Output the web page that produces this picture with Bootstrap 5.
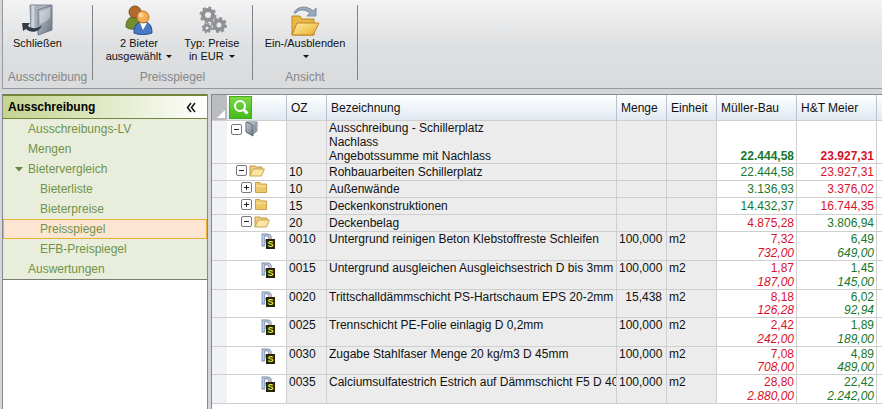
<!DOCTYPE html>
<html lang="de">
<head>
<meta charset="utf-8">
<meta name="viewport" content="width=device-width, initial-scale=1">
<title>Preisspiegel</title>
<link href="https://cdn.jsdelivr.net/npm/bootstrap@5.3.0/dist/css/bootstrap.min.css" rel="stylesheet">
<style>
body{font-family:"Liberation Sans",Arial,sans-serif;font-size:12px;line-height:14px;color:#111;background:#d4d6d9}
.app{min-height:100vh;padding-left:2px}
.ribbon{border:1px solid #96989d;border-width:0 0 1px 1px;background:linear-gradient(#f3f3f4,#dedfe0 55%,#dadbdc);padding-bottom:8px}
.group{border-right:1px solid #7f828a;margin-top:5px;height:75px}
.group-body{flex:1 1 auto}
.group-name{color:#85878a;line-height:14px;margin-bottom:-4px}
.g1{width:90px}.g2{width:160px}.g3{width:105px}
.g1 .group-body{padding-left:10px}
.pair{gap:12px}
.tool{background:none;border:0;padding:0;font-size:11px;line-height:13px;color:#111;margin-top:-5px}
.tool svg{display:block;margin:2px auto 1px}
.caret{display:inline-block;border:3px solid transparent;border-top-color:#111;border-bottom:0;vertical-align:2px;margin-left:2px}
.work{padding-top:5px;gap:3px}
.side{width:206px;background:#fff;border:1px solid #85888e;border-width:0 1px}
.side-head{height:25px;background:linear-gradient(90deg,#c4d48f,#fff);border-top:2px solid #71853b;border-bottom:1px solid #71853b;padding:0 11px 0 5px;color:#000}
.fold{background:none;border:0;padding:0;line-height:0}
.tree{background:#e8eedb;border-bottom:1px solid #777b72}
.tree a{display:flex;align-items:center;height:20px;color:#71934a;text-decoration:none;padding-left:24px;border:1px solid transparent}
.tree a.open{padding-left:11px}
.tree a.open svg{margin-right:5px}
.tree a.sub{padding-left:36px}
.tree a.active{background:#fce6d2;border-color:#e8b23a}
.sheet{background:#fff;border:1px solid #85888e;border-width:1px 0 0 1px;min-width:0}
.prices{table-layout:fixed;border-collapse:separate;border-spacing:0;width:100%;margin:0}
.prices th,.prices td{border:0 solid #cfcfd0;border-width:0 1px 1px 0;padding:0 2px;vertical-align:top;white-space:nowrap;overflow:hidden}
.prices th{height:26px;font-weight:400;vertical-align:middle;padding:0 4px;background:linear-gradient(#fff,#e0e9f1);border-right-color:#b8c3cd}
.prices td{line-height:14px}
.prices .txt{background:#ececec}
.prices td.pad{background:#f0f2f7;border-right:0}
.prices th.corner{background:#bcbdbf;border-right:0;vertical-align:bottom;padding:0 2px 2px;text-align:right}
.prices th.find{padding:0 2px}
.prices svg,.prices button{display:block}
.prices .lv{display:flex;align-items:center;gap:2px}
.l0{padding-left:2px}.l1{padding-left:7px}.l2{padding-left:12px}.l3{padding-left:32px}
.search{width:23px;height:23px;border:1px solid #49a81f;background:linear-gradient(#7bd843,#46b91f)}
.prices .search,.prices .box{padding:0}
.box{width:11px;height:11px;border:1px solid #777;border-radius:2px;background:#fff;flex:none}
.pos{position:relative;width:14px;height:17px;font-size:16px;line-height:17px;font-weight:700;color:#d3dcea;-webkit-text-stroke:1px #8593a8}
.pos b{position:absolute;right:0;bottom:0;width:9px;height:10px;background:#222410;color:#f0ec2c;font-size:9px;line-height:10px;text-align:center;-webkit-text-stroke:0}
.top td{height:43px}.one td{height:17px}.two td{height:29px}.two.tight td{height:28px}
.one td{line-height:16px}
.prices td.num{text-align:right;vertical-align:bottom}
.prices .tight td.num{line-height:13px}
.prices td.qty{text-align:right;padding-right:4px}
.up{color:#d9122c}.ok{color:#17772a}
</style>
<script src="https://cdn.jsdelivr.net/npm/bootstrap@5.3.0/dist/js/bootstrap.bundle.min.js"></script>
</head>
<body>
<svg width="0" height="0" class="position-absolute" aria-hidden="true">
<defs>
<linearGradient id="gold" x1="0" y1="0" x2="1" y2="1"><stop offset="0" stop-color="#fff0a8"/><stop offset="1" stop-color="#e8ac25"/></linearGradient>
<linearGradient id="steel" x1="0" y1="0" x2="1" y2="1"><stop offset="0" stop-color="#c9d0d8"/><stop offset="1" stop-color="#66717f"/></linearGradient>
</defs>
<symbol id="fopen" viewBox="0 0 16 13"><path d="M1 12V2h5l1 1h6v2" fill="#efcf80" stroke="#c29a4a"/><path d="M1 12 4 5h11.400l-2.900 7z" fill="#fbe5a4" stroke="#cda452"/></symbol>
<symbol id="fclosed" viewBox="0 0 14 13"><path d="M1.500 11.500v-10H6l1 1.500h5.500v8.500z" fill="#edc868" stroke="#c9a04b"/><path d="M2 5h10" stroke="#fae6ab"/></symbol>
<symbol id="plus" viewBox="0 0 9 9"><path d="M2 4.500h5M4.500 2v5" stroke="#222"/></symbol>
<symbol id="minus" viewBox="0 0 9 9"><path d="M2 4.500h5" stroke="#222"/></symbol>
</svg>
<div class="app d-flex flex-column">
<header class="ribbon d-flex">
 <section class="group g1 d-flex flex-column">
  <div class="group-body d-flex"><button class="tool align-self-start"><svg width="34" height="34" viewBox="0 0 34 34"><path d="M10 3h21v4l-8 24-3-3h-9z" fill="#aab4bf" stroke="#7c8793"/><path d="M11 3h4v24h-4z" fill="#cdd4db" stroke="#8c96a2" stroke-width=".6"/><path d="m18 8 14-5v25l-14 5z" fill="url(#steel)" stroke="#6f7b89"/><path d="m20 10 10-4v9c-3 4-6 6-10 7z" fill="#fff" opacity=".35"/><path d="M2 21l8 0-2 3c4 3 10 3 14-1-2 7-11 9-16 4l-3 2z" fill="#353c49"/></svg>Schließen</button></div>
  <div class="group-name text-center">Ausschreibung</div>
 </section>
 <section class="group g2 d-flex flex-column">
  <div class="group-body pair d-flex justify-content-center">
   <button class="tool align-self-start"><svg width="34" height="34" viewBox="0 0 34 34"><path d="M4 25c0-7 3-10 8-10s8 3 8 10c-5 3-12 3-16 0z" fill="#758d2f" stroke="#4e641d"/><circle cx="13" cy="10" r="6" fill="#b06b2c" stroke="#80501f"/><path d="M12 31c0-8 3-11 9-11s9 3 9 11c-6 2-13 2-18 0z" fill="#4779c5" stroke="#244d91"/><path d="m18 21 3 7 4-7z" fill="#fff"/><circle cx="21" cy="15" r="6" fill="#f3ad53" stroke="#bd7429"/><circle cx="19" cy="13" r="2.500" fill="#fbd59a"/></svg>2 Bieter<br>ausgewählt <span class="caret"></span></button>
   <button class="tool align-self-start"><svg width="34" height="34" viewBox="0 0 34 34"><g fill="none" stroke="#8f9194"><circle cx="13" cy="13" r="5" stroke-width="4"/><circle cx="13" cy="13" r="7.500" stroke-width="2" stroke-dasharray="3 2.900"/><circle cx="24" cy="23" r="4.500" stroke-width="4"/><circle cx="24" cy="23" r="7" stroke-width="2" stroke-dasharray="3 2.500"/><circle cx="12" cy="26" r="2.800" stroke-width="2.500"/><circle cx="12" cy="26" r="4.500" stroke-width="1.500" stroke-dasharray="2 1.500"/></g></svg>Typ: Preise<br>in EUR <span class="caret"></span></button>
  </div>
  <div class="group-name text-center">Preisspiegel</div>
 </section>
 <section class="group g3 d-flex flex-column">
  <div class="group-body d-flex justify-content-center"><button class="tool align-self-start"><svg width="34" height="34" viewBox="0 0 34 34"><path d="M6 11C9 4 19 3 25 9l3-3v8h-9l3-3c-5-4-11-4-14 0z" fill="#9babbc" stroke="#7d8ea0"/><path d="M4 33V14h8l2 3h12v16z" fill="#e8b945" stroke="#bd8423"/><path d="m4 33 5-12h22l-6 12z" fill="url(#gold)" stroke="#bd8423"/></svg>Ein-/Ausblenden<br><span class="caret"></span></button></div>
  <div class="group-name text-center">Ansicht</div>
 </section>
</header>
<main class="work d-flex flex-grow-1">
 <nav class="side flex-shrink-0">
  <div class="side-head d-flex align-items-center justify-content-between"><strong>Ausschreibung</strong><button class="fold" aria-label="Einklappen"><svg width="10" height="11" viewBox="0 0 10 11"><path d="M5 1 1.500 5.500 5 10M9 1 5.500 5.500 9 10" fill="none" stroke="#111" stroke-width="1.500"/></svg></button></div>
  <div class="tree">
   <a href="#">Ausschreibungs-LV</a><a href="#">Mengen</a>
   <a href="#" class="open"><svg width="8" height="5" viewBox="0 0 8 5"><path d="M0 0h8L4 4.500z" fill="#66873e"/></svg>Bietervergleich</a>
   <a href="#" class="sub">Bieterliste</a><a href="#" class="sub">Bieterpreise</a><a href="#" class="sub active">Preisspiegel</a><a href="#" class="sub">EFB-Preispiegel</a>
   <a href="#">Auswertungen</a>
  </div>
 </nav>
 <section class="sheet flex-grow-1">
 <table class="prices">
 <colgroup><col style="width:15px"><col style="width:60px"><col style="width:40px"><col><col style="width:50px"><col style="width:50px"><col style="width:80px"><col style="width:80px"><col style="width:5px"></colgroup>
 <thead><tr><th class="corner"><svg width="8" height="8" class="ms-auto"><path d="M8 0v8H0z" fill="#fff"/></svg></th><th class="find"><button class="search" aria-label="Suchen"><svg width="21" height="21" viewBox="0 0 21 21"><circle cx="10" cy="9" r="5" fill="none" stroke="#fff" stroke-width="2"/><path d="m13.500 12.500 4 4" stroke="#fff" stroke-width="3"/></svg></button></th><th>OZ</th><th>Bezeichnung</th><th>Menge</th><th>Einheit</th><th>Müller-Bau</th><th>H&amp;T Meier</th><th class="p-0 border-end-0"></th></tr></thead>
 <tbody>
 <tr class="top"><td class="pad"></td><td><div class="lv l0"><button class="box" aria-label="Zuklappen"><svg width="9" height="9"><use href="#minus"/></svg></button><svg width="16" height="16" viewBox="0 0 16 16"><path d="M3 1h10v9l-3 2-7-1z" fill="#c3cbd3" stroke="#75808c"/><path d="m2 1 7 3v11l-7-4z" fill="url(#steel)" stroke="#5d6976"/><path d="M9 4l3-2v9l-3 3z" fill="#8f9aa6"/></svg></div></td><td class="txt"></td><td class="txt">Ausschreibung - Schillerplatz<br>Nachlass<br>Angebotssumme mit Nachlass</td><td class="txt"></td><td class="txt"></td><td class="num ok fw-bold">22.444,58</td><td class="num up fw-bold">23.927,31</td><td class="p-0 border-end-0"></td></tr>
 <tr class="one"><td class="pad"></td><td><div class="lv l1"><button class="box" aria-label="Zuklappen"><svg width="9" height="9"><use href="#minus"/></svg></button><svg width="16" height="13"><use href="#fopen"/></svg></div></td><td class="txt">10</td><td class="txt">Rohbauarbeiten Schillerplatz</td><td class="txt"></td><td class="txt"></td><td class="num ok">22.444,58</td><td class="num up">23.927,31</td><td class="p-0 border-end-0"></td></tr>
 <tr class="one"><td class="pad"></td><td><div class="lv l2"><button class="box" aria-label="Aufklappen"><svg width="9" height="9"><use href="#plus"/></svg></button><svg width="14" height="13"><use href="#fclosed"/></svg></div></td><td class="txt">10</td><td class="txt">Außenwände</td><td class="txt"></td><td class="txt"></td><td class="num ok">3.136,93</td><td class="num up">3.376,02</td><td class="p-0 border-end-0"></td></tr>
 <tr class="one"><td class="pad"></td><td><div class="lv l2"><button class="box" aria-label="Aufklappen"><svg width="9" height="9"><use href="#plus"/></svg></button><svg width="14" height="13"><use href="#fclosed"/></svg></div></td><td class="txt">15</td><td class="txt">Deckenkonstruktionen</td><td class="txt"></td><td class="txt"></td><td class="num ok">14.432,37</td><td class="num up">16.744,35</td><td class="p-0 border-end-0"></td></tr>
 <tr class="one"><td class="pad"></td><td><div class="lv l2"><button class="box" aria-label="Zuklappen"><svg width="9" height="9"><use href="#minus"/></svg></button><svg width="16" height="13"><use href="#fopen"/></svg></div></td><td class="txt">20</td><td class="txt">Deckenbelag</td><td class="txt"></td><td class="txt"></td><td class="num up">4.875,28</td><td class="num ok">3.806,94</td><td class="p-0 border-end-0"></td></tr>
 <tr class="two"><td class="pad"></td><td><div class="lv l3"><span class="pos">P<b>S</b></span></div></td><td class="txt">0010</td><td class="txt">Untergrund reinigen Beton Klebstoffreste Schleifen</td><td class="txt qty">100,000</td><td class="txt">m2</td><td class="num up">7,32<br><em>732,00</em></td><td class="num ok">6,49<br><em>649,00</em></td><td class="p-0 border-end-0"></td></tr>
 <tr class="two"><td class="pad"></td><td><div class="lv l3"><span class="pos">P<b>S</b></span></div></td><td class="txt">0015</td><td class="txt">Untergrund ausgleichen Ausgleichsestrich D bis 3mm</td><td class="txt qty">100,000</td><td class="txt">m2</td><td class="num up">1,87<br><em>187,00</em></td><td class="num ok">1,45<br><em>145,00</em></td><td class="p-0 border-end-0"></td></tr>
 <tr class="two tight"><td class="pad"></td><td><div class="lv l3"><span class="pos">P<b>S</b></span></div></td><td class="txt">0020</td><td class="txt">Trittschalldämmschicht PS-Hartschaum EPS 20-2mm</td><td class="txt qty">15,438</td><td class="txt">m2</td><td class="num up">8,18<br><em>126,28</em></td><td class="num ok">6,02<br><em>92,94</em></td><td class="p-0 border-end-0"></td></tr>
 <tr class="two"><td class="pad"></td><td><div class="lv l3"><span class="pos">P<b>S</b></span></div></td><td class="txt">0025</td><td class="txt">Trennschicht PE-Folie einlagig D 0,2mm</td><td class="txt qty">100,000</td><td class="txt">m2</td><td class="num up">2,42<br><em>242,00</em></td><td class="num ok">1,89<br><em>189,00</em></td><td class="p-0 border-end-0"></td></tr>
 <tr class="two tight"><td class="pad"></td><td><div class="lv l3"><span class="pos">P<b>S</b></span></div></td><td class="txt">0030</td><td class="txt">Zugabe Stahlfaser Menge 20 kg/m3 D 45mm</td><td class="txt qty">100,000</td><td class="txt">m2</td><td class="num up">7,08<br><em>708,00</em></td><td class="num ok">4,89<br><em>489,00</em></td><td class="p-0 border-end-0"></td></tr>
 <tr class="two"><td class="pad"></td><td><div class="lv l3"><span class="pos">P<b>S</b></span></div></td><td class="txt">0035</td><td class="txt">Calciumsulfatestrich Estrich auf Dämmschicht F5 D 40</td><td class="txt qty">100,000</td><td class="txt">m2</td><td class="num up">28,80<br><em>2.880,00</em></td><td class="num ok">22,42<br><em>2.242,00</em></td><td class="p-0 border-end-0"></td></tr>
 </tbody></table>
 </section>
</main>
</div>
</body>
</html>
